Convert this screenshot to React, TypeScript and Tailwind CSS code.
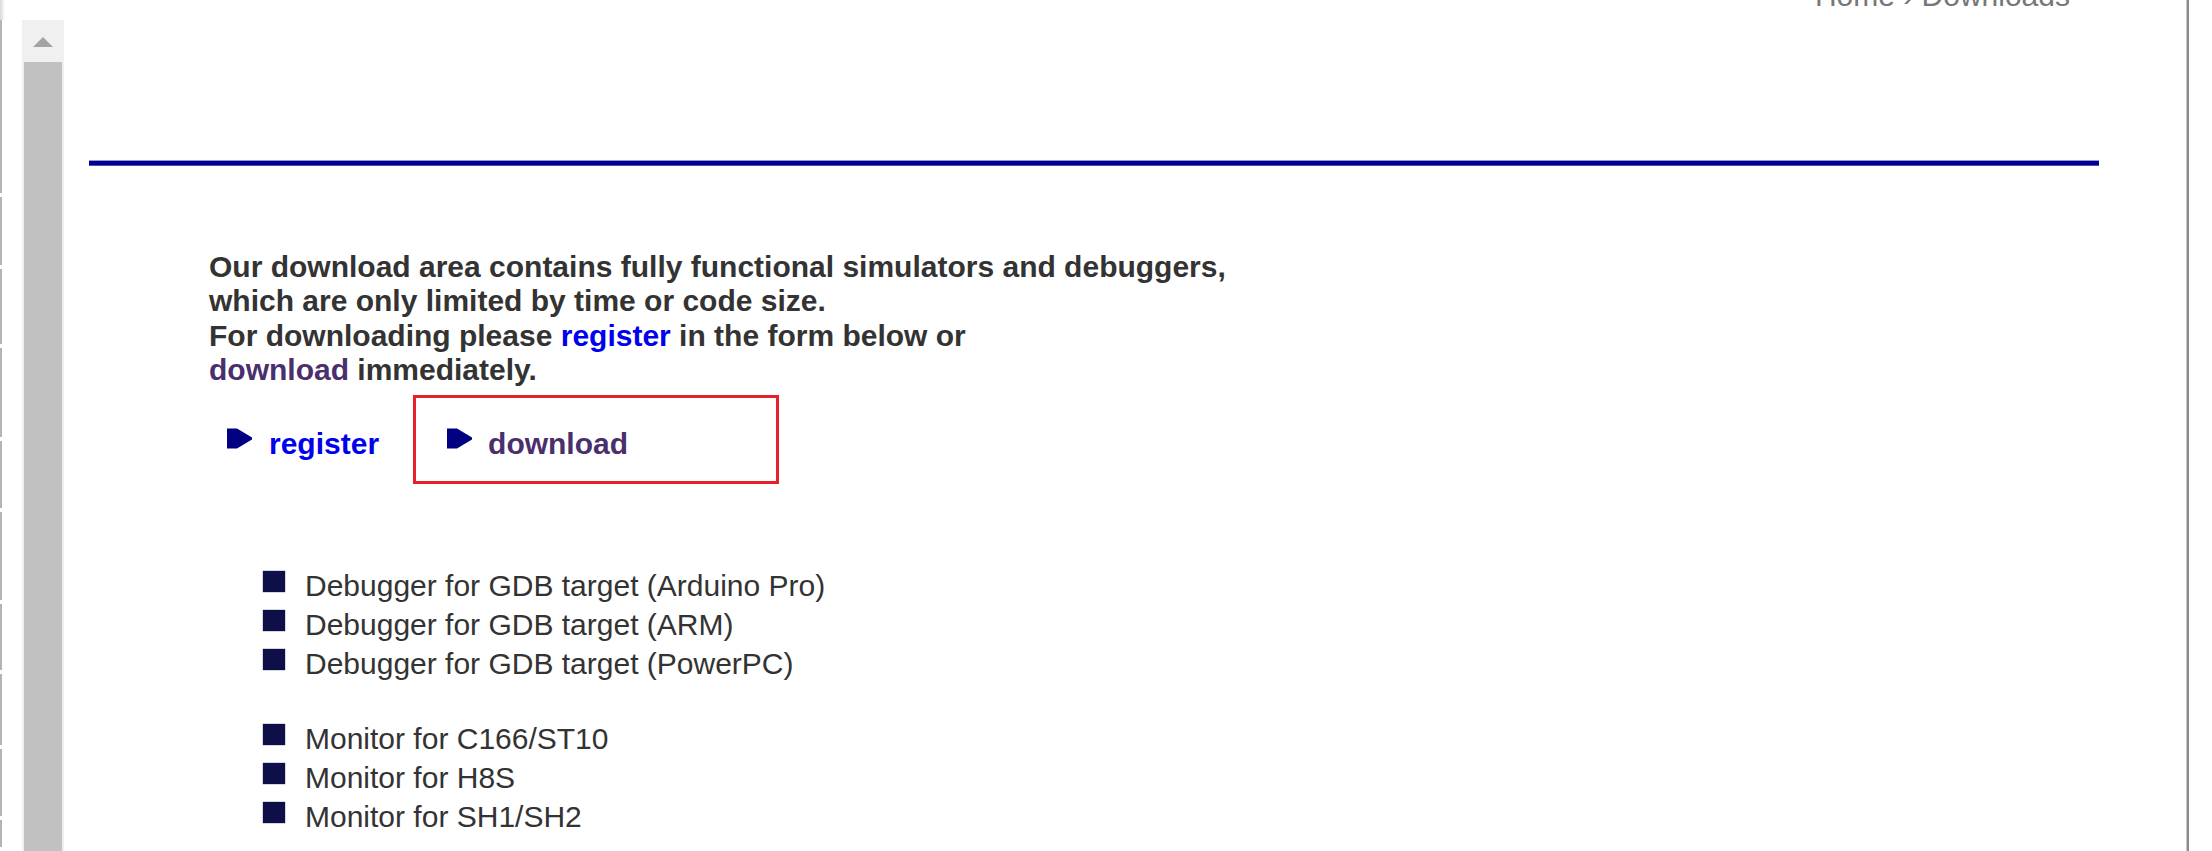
import React from 'react';

const font = { fontFamily: '"Liberation Sans", Arial, sans-serif' };

// gaps in the thin frame edge on the far left
const edgeSegments = [174, 68, 76, 89, 67, 89, 66, 72, 67, 27];

const debuggers = [
  'Debugger for GDB target (Arduino Pro)',
  'Debugger for GDB target (ARM)',
  'Debugger for GDB target (PowerPC)',
];

const monitors = ['Monitor for C166/ST10', 'Monitor for H8S', 'Monitor for SH1/SH2'];

const Arrow = () => (
  <svg width="27" height="23" viewBox="0 0 27 23" className="shrink-0">
    <path d="M1 1.5 L11 1.5 L26 10.5 L26 12.5 L11 21.5 L1 21.5 Z" fill="#000080" />
  </svg>
);

const Bullet = () => <span className="mt-[5px] block h-[21px] w-[22px] shrink-0 bg-[#0e0e48] shadow-[0_0_1px_#0e0e48]" />;

const ListBlock: React.FC<{ items: string[] }> = ({ items }) => (
  <ul className="flex flex-col">
    {items.map((item) => (
      <li key={item} className="flex items-start gap-[20px] leading-[39px]">
        <Bullet />
        <span>{item}</span>
      </li>
    ))}
  </ul>
);

export default function App() {
  return (
    <div className="flex h-[851px] w-[2212px] overflow-hidden bg-white text-[30px] text-[#333333]" style={font}>
      {/* left frame edge */}
      <div className="flex w-[2px] flex-col">
        <div className="h-[20px] w-[5px] bg-gradient-to-r from-[#d8d8d8] to-white" />
        {edgeSegments.map((h, i) => (
          <div key={i} className="mb-[4px] w-[2px] bg-[#b4b4b4]" style={{ height: h }} />
        ))}
      </div>

      {/* frame scrollbar */}
      <div className="ml-[20px] mt-[20px] flex w-[42px] flex-col items-center bg-[#f0f0f0]">
        <div className="flex h-[42px] items-start justify-center pt-[17px]">
          <div className="h-0 w-0 border-x-[10px] border-b-[10px] border-x-transparent border-b-[#a3a3a3]" />
        </div>
        <div className="w-[38px] flex-1 bg-[#c1c1c1]" />
      </div>

      {/* page content */}
      <div className="flex-1">
        <div className="-mt-[21px] flex justify-end pr-[116px] leading-[34.5px] text-[#777777]">
          Home › Downloads
        </div>

        <div className="ml-[25px] mr-[87px] mt-[146px] h-[6px] border-y border-t-[#9a9ad0] border-b-[#5050aa] bg-[#000099]" />

        <div className="ml-[145px] mt-[84px]">
          <p className="font-bold leading-[34.5px]">
            Our download area contains fully functional simulators and debuggers,
            <br />
            which are only limited by time or code size.
            <br />
            For downloading please <a className="text-[#0000ee]">register</a> in the form below or
            <br />
            <a className="text-[#4a2f6e]">download</a> immediately.
          </p>

          <div className="mt-[7px] flex items-start font-bold">
            <div className="ml-[17px] mt-[32px] flex items-start gap-[16px] leading-[34.5px] text-[#0000ee]">
              <Arrow />
              <span>register</span>
            </div>
            <div className="ml-[34px] flex w-[366px] items-start gap-[15px] border-[3px] border-[#e8202a] pb-[20px] pl-[30px] pt-[29px] leading-[34.5px] text-[#4a2f6e]">
              <Arrow />
              <span>download</span>
            </div>
          </div>

          <div className="ml-[54px] mt-[82px] flex flex-col gap-[36px]">
            <ListBlock items={debuggers} />
            <ListBlock items={monitors} />
          </div>
        </div>
      </div>

      {/* right frame border */}
      <div className="flex w-[26px]">
        <div className="w-[1px] bg-[#c8c8c8]" />
        <div className="w-[2px] bg-[#8c8c8c]" />
      </div>
    </div>
  );
}
